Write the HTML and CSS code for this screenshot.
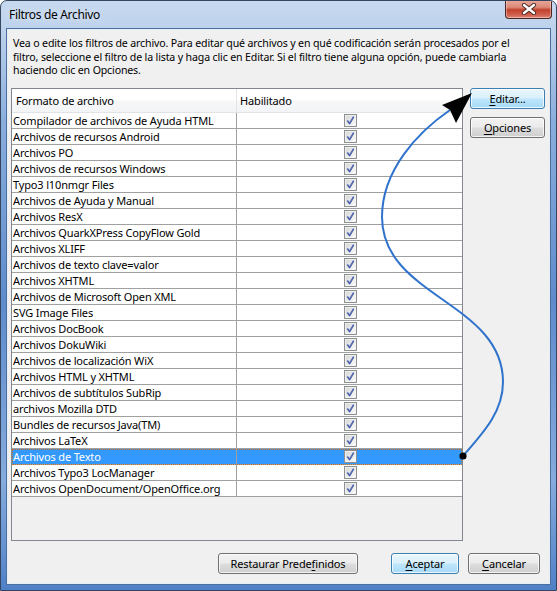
FILE: index.html
```html
<!DOCTYPE html>
<html>
<head>
<meta charset="utf-8">
<link rel="stylesheet" href="styles.css">
</head>
<body>
<svg width="0" height="0" class="defs">
  <defs>
    <linearGradient id="cbg" x1="0" y1="0" x2="1" y2="1">
      <stop offset="0" stop-color="#d6d6d6"/>
      <stop offset="1" stop-color="#fbfbfb"/>
    </linearGradient>
    <symbol id="chk" viewBox="0 0 13 13">
      <rect x="0.5" y="0.5" width="12" height="12" fill="#f4f4f4" stroke="#8e8f8f"/>
      <rect x="1.5" y="1.5" width="10" height="10" fill="url(#cbg)" stroke="#f4f4f4" stroke-width="0.6"/>
      <path d="M3.3 6.6 L5.6 9.6 L9.7 2.6" fill="none" stroke="#4a64ad" stroke-width="1.7" stroke-linejoin="round"/>
    </symbol>
  </defs>
</svg>
<div class="window">
  <div class="titlebar">
    <span class="title">Filtros de Archivo</span>
    <div class="close">
      <svg width="16" height="12" viewBox="0 0 16 12">
        <path d="M3 2 L13 10 M13 2 L3 10" stroke="#4a2a22" stroke-width="4.2" stroke-linecap="round"/>
        <path d="M3 2 L13 10 M13 2 L3 10" stroke="#ffffff" stroke-width="2.4" stroke-linecap="round"/>
      </svg>
    </div>
  </div>
  <div class="client">
    <p class="desc">Vea o edite los filtros de archivo. Para editar qué archivos y en qué codificación serán procesados por el<br>filtro, seleccione el filtro de la lista y haga clic en Editar. Si el filtro tiene alguna opción, puede cambiarla<br>haciendo clic en Opciones.</p>
    <div class="main">
      <div class="list">
        <div class="hdr"><div class="c1">Formato de archivo</div><div class="c2">Habilitado</div></div>
        <div class="row"><div class="c1">Compilador de archivos de Ayuda HTML</div><div class="c2"><svg class="cb"><use href="#chk"/></svg></div></div>
        <div class="row"><div class="c1">Archivos de recursos Android</div><div class="c2"><svg class="cb"><use href="#chk"/></svg></div></div>
        <div class="row"><div class="c1">Archivos PO</div><div class="c2"><svg class="cb"><use href="#chk"/></svg></div></div>
        <div class="row"><div class="c1">Archivos de recursos Windows</div><div class="c2"><svg class="cb"><use href="#chk"/></svg></div></div>
        <div class="row"><div class="c1">Typo3 l10nmgr Files</div><div class="c2"><svg class="cb"><use href="#chk"/></svg></div></div>
        <div class="row"><div class="c1">Archivos de Ayuda y Manual</div><div class="c2"><svg class="cb"><use href="#chk"/></svg></div></div>
        <div class="row"><div class="c1">Archivos ResX</div><div class="c2"><svg class="cb"><use href="#chk"/></svg></div></div>
        <div class="row"><div class="c1">Archivos QuarkXPress CopyFlow Gold</div><div class="c2"><svg class="cb"><use href="#chk"/></svg></div></div>
        <div class="row"><div class="c1">Archivos XLIFF</div><div class="c2"><svg class="cb"><use href="#chk"/></svg></div></div>
        <div class="row"><div class="c1">Archivos de texto clave=valor</div><div class="c2"><svg class="cb"><use href="#chk"/></svg></div></div>
        <div class="row"><div class="c1">Archivos XHTML</div><div class="c2"><svg class="cb"><use href="#chk"/></svg></div></div>
        <div class="row"><div class="c1">Archivos de Microsoft Open XML</div><div class="c2"><svg class="cb"><use href="#chk"/></svg></div></div>
        <div class="row"><div class="c1">SVG Image Files</div><div class="c2"><svg class="cb"><use href="#chk"/></svg></div></div>
        <div class="row"><div class="c1">Archivos DocBook</div><div class="c2"><svg class="cb"><use href="#chk"/></svg></div></div>
        <div class="row"><div class="c1">Archivos DokuWiki</div><div class="c2"><svg class="cb"><use href="#chk"/></svg></div></div>
        <div class="row"><div class="c1">Archivos de localización WiX</div><div class="c2"><svg class="cb"><use href="#chk"/></svg></div></div>
        <div class="row"><div class="c1">Archivos HTML y XHTML</div><div class="c2"><svg class="cb"><use href="#chk"/></svg></div></div>
        <div class="row"><div class="c1">Archivos de subtítulos SubRip</div><div class="c2"><svg class="cb"><use href="#chk"/></svg></div></div>
        <div class="row"><div class="c1">archivos Mozilla DTD</div><div class="c2"><svg class="cb"><use href="#chk"/></svg></div></div>
        <div class="row"><div class="c1">Bundles de recursos Java(TM)</div><div class="c2"><svg class="cb"><use href="#chk"/></svg></div></div>
        <div class="row"><div class="c1">Archivos LaTeX</div><div class="c2"><svg class="cb"><use href="#chk"/></svg></div></div>
        <div class="row sel"><div class="c1">Archivos de Texto</div><div class="c2"><svg class="cb"><use href="#chk"/></svg></div></div>
        <div class="row"><div class="c1">Archivos Typo3 LocManager</div><div class="c2"><svg class="cb"><use href="#chk"/></svg></div></div>
        <div class="row"><div class="c1">Archivos OpenDocument/OpenOffice.org</div><div class="c2"><svg class="cb"><use href="#chk"/></svg></div></div>
      </div>
      <div class="side">
        <button class="btn hot"><u>E</u>ditar...</button>
        <button class="btn"><u>O</u>pciones</button>
      </div>
    </div>
    <div class="footer">
      <button class="btn wide">Restaurar Prede<u>f</u>inidos</button>
      <button class="btn def ok"><u>A</u>ceptar</button>
      <button class="btn cancel"><u>C</u>ancelar</button>
    </div>
  </div>
  <svg class="annot" width="557" height="591" viewBox="0 0 557 591">
    <path d="M463 456 C483 433 503 412 503 382 C503 302 382 297 382 217 C382 170 418 132 450 110" fill="none" stroke="#2f73cc" stroke-width="2"/>
    <polygon points="472,93 442,105 450,110 456,123" fill="#000"/>
    <circle cx="463" cy="456" r="3.6" fill="#000"/>
  </svg>
</div>
</body>
</html>
```
FILE: styles.css
```css
* { box-sizing: border-box; }
html, body { margin: 0; padding: 0; background: #fff; }
.defs { position: absolute; }
.window {
  position: relative;
  width: 557px;
  height: 591px;
  border: 1px solid #34465f;
  border-radius: 7px 7px 0 0;
  background:
    linear-gradient(to bottom, #c7d9ef 0px, #bcd1eb 30px, #8aaedc 120px, #5f8bcb 300px, #86abdc 480px, #4f80c6 591px);
  display: flex;
  flex-direction: column;
  font-family: "Noto Sans", "Open Sans", sans-serif;
  font-size: 11px;
  letter-spacing: -0.15px;
  color: #000;
  overflow: hidden;
}
.titlebar {
  height: 29px;
  flex: none;
  display: flex;
  align-items: flex-start;
  justify-content: space-between;
  padding-left: 8px;
  position: relative;
}
.title {
  font-size: 12px;
  letter-spacing: -0.33px;
  line-height: 14px;
  margin-top: 7px;
  color: #000;
  text-shadow: 0 0 6px #e8f0fa;
}
.close {
  width: 47px;
  height: 19px;
  margin-top: -1px;
  margin-right: 4px;
  border: 1px solid #4c2622;
  border-top: none;
  border-radius: 0 0 4px 4px;
  background: linear-gradient(to bottom, #e9a99c 0%, #dc8a79 40%, #c2412c 55%, #d16452 85%, #e08d7a 100%);
  box-shadow: inset 0 0 0 1px rgba(255,255,255,0.35);
  display: flex;
  align-items: center;
  justify-content: center;
}
.client {
  flex: none;
  margin: 0 6px 0 7px;
  width: 541px;
  height: 553px;
  background: #f0f0f0;
  box-shadow: 0 0 0 1px #e6eef8, 0 0 0 2px #4d6f9f;
  display: flex;
  flex-direction: column;
}
.desc {
  margin: 0;
  padding: 7px 0 0 5px;
  height: 48px;
  font-size: 10.6px;
  letter-spacing: -0.15px;
  line-height: 13.5px;
  white-space: nowrap;
}
.main {
  margin-top: 10px;
  display: flex;
  height: 453px;
}
.list {
  margin-left: 3px;
  width: 452px;
  height: 453px;
  border: 1px solid #828790;
  background: #f0f0f0;
  overflow: hidden;
}
.hdr {
  display: flex;
  height: 24px;
  border-bottom: 1px solid #e2e3e6;
  background: linear-gradient(to bottom, #ffffff 0%, #ffffff 45%, #f6f7f8 55%, #f3f4f6 100%);
  line-height: 23px;
}
.hdr .c1 { width: 225px; padding-left: 4px; border-right: 1px solid #e3e4e6; }
.hdr .c2 { flex: 1; padding-left: 3px; }
.row {
  display: flex;
  height: 16px;
  background: #fff;
  border-bottom: 1px solid #a0a0a0;
  line-height: 15px;
  white-space: nowrap;
}
.row .c1 { width: 225px; padding-left: 1px; border-right: 1px solid #a0a0a0; }
.row .c2 { flex: 1; display: flex; align-items: center; justify-content: center; padding-left: 1px; }
.cb { width: 13px; height: 13px; display: block; }
.row.sel { background: #3399ff; color: #fff; outline: 1px dotted #c0702a; outline-offset: -1px; }
.side {
  margin-left: 7px;
  width: 75px;
  display: flex;
  flex-direction: column;
  gap: 8px;
}
.btn {
  font: inherit;
  letter-spacing: inherit;
  color: #000;
  height: 21px;
  padding: 0;
  border: 1px solid #707070;
  border-radius: 3px;
  background: linear-gradient(to bottom, #f2f2f2 0%, #ebebeb 48%, #dddddd 52%, #cfcfcf 100%);
  box-shadow: inset 0 0 0 1px rgba(255,255,255,0.75);
  line-height: 18px;
  text-align: center;
}
.btn u { text-decoration: underline; text-underline-offset: 2px; }
.btn.hot, .btn.def {
  border-color: #3c7fb1;
  background: linear-gradient(to bottom, #eaf6fd 0%, #d9f0fc 48%, #bee6fd 52%, #a7d9f5 100%);
}
.footer {
  margin-top: 12px;
  display: flex;
  padding-left: 210px;
}
.footer .wide { width: 140px; }
.footer .ok { width: 68px; margin-left: 33px; }
.footer .cancel { width: 72px; margin-left: 9px; }
.annot { position: absolute; left: -1px; top: -1px; pointer-events: none; }
```
